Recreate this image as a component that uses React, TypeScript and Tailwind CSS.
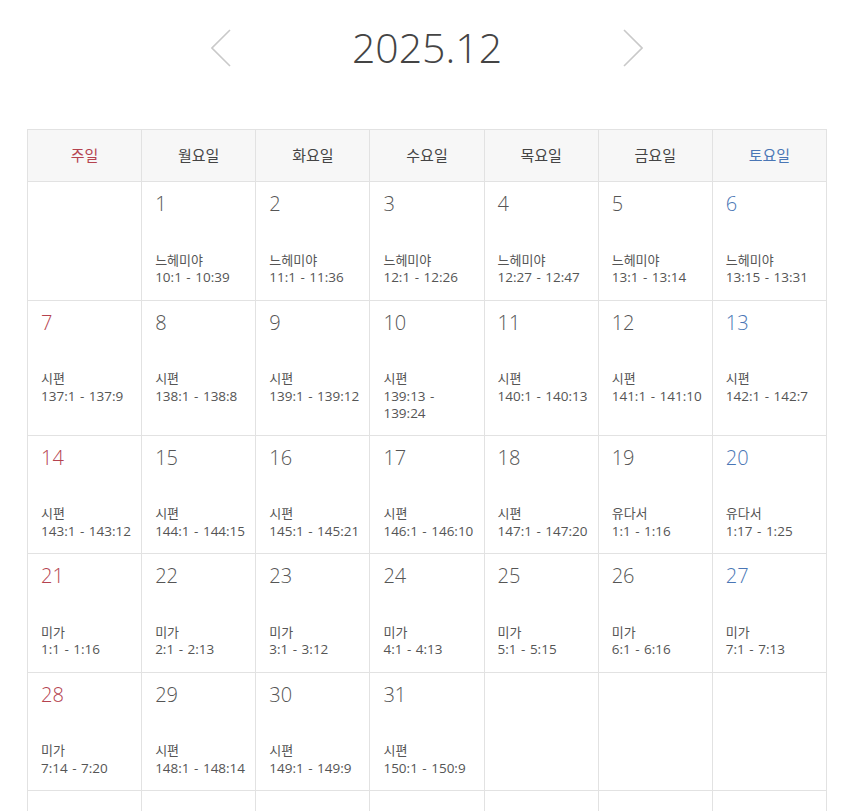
import React from "react";

type Day = { d: number; book: string; range: string } | null;

const WEEKDAYS = ["주일", "월요일", "화요일", "수요일", "목요일", "금요일", "토요일"];

const WEEKS: Day[][] = [
  [
    null,
    { d: 1, book: "느헤미야", range: "10:1 - 10:39" },
    { d: 2, book: "느헤미야", range: "11:1 - 11:36" },
    { d: 3, book: "느헤미야", range: "12:1 - 12:26" },
    { d: 4, book: "느헤미야", range: "12:27 - 12:47" },
    { d: 5, book: "느헤미야", range: "13:1 - 13:14" },
    { d: 6, book: "느헤미야", range: "13:15 - 13:31" },
  ],
  [
    { d: 7, book: "시편", range: "137:1 - 137:9" },
    { d: 8, book: "시편", range: "138:1 - 138:8" },
    { d: 9, book: "시편", range: "139:1 - 139:12" },
    { d: 10, book: "시편", range: "139:13 - 139:24" },
    { d: 11, book: "시편", range: "140:1 - 140:13" },
    { d: 12, book: "시편", range: "141:1 - 141:10" },
    { d: 13, book: "시편", range: "142:1 - 142:7" },
  ],
  [
    { d: 14, book: "시편", range: "143:1 - 143:12" },
    { d: 15, book: "시편", range: "144:1 - 144:15" },
    { d: 16, book: "시편", range: "145:1 - 145:21" },
    { d: 17, book: "시편", range: "146:1 - 146:10" },
    { d: 18, book: "시편", range: "147:1 - 147:20" },
    { d: 19, book: "유다서", range: "1:1 - 1:16" },
    { d: 20, book: "유다서", range: "1:17 - 1:25" },
  ],
  [
    { d: 21, book: "미가", range: "1:1 - 1:16" },
    { d: 22, book: "미가", range: "2:1 - 2:13" },
    { d: 23, book: "미가", range: "3:1 - 3:12" },
    { d: 24, book: "미가", range: "4:1 - 4:13" },
    { d: 25, book: "미가", range: "5:1 - 5:15" },
    { d: 26, book: "미가", range: "6:1 - 6:16" },
    { d: 27, book: "미가", range: "7:1 - 7:13" },
  ],
  [
    { d: 28, book: "미가", range: "7:14 - 7:20" },
    { d: 29, book: "시편", range: "148:1 - 148:14" },
    { d: 30, book: "시편", range: "149:1 - 149:9" },
    { d: 31, book: "시편", range: "150:1 - 150:9" },
    null,
    null,
    null,
  ],
  [null, null, null, null, null, null, null],
];

const font = "font-['Open_Sans','Noto_Sans_CJK_KR',sans-serif]";

function Chevron({ dir }: { dir: "left" | "right" }) {
  return (
    <svg width="20" height="38" viewBox="0 0 20 38" fill="none" className="shrink-0">
      <path
        d={dir === "left" ? "M19 1 L1 19 L19 37" : "M1 1 L19 19 L1 37"}
        stroke="#c9c9c9"
        strokeWidth="1.6"
      />
    </svg>
  );
}

function Cell({ day, col }: { day: Day; col: number }) {
  const numColor =
    col === 0 ? "text-[#b5434f]" : col === 6 ? "text-[#4a76b5]" : "text-[#555]";
  return (
    <div className="border-r border-b border-[#e2e2e2] pl-[13px] pr-[8px] pt-[10px] pb-[12px] min-h-[118.5px]">
      {day && (
        <>
          <div className={`h-[24px] text-[20px] leading-[24px] font-light ${numColor}`}>
            {day.d}
          </div>
          <div className="mt-[35.5px] leading-[17.5px] text-[#555]">
            <div className="text-[13px]">{day.book}</div>
            <div className="text-[13.5px] [word-spacing:1px]">{day.range}</div>
          </div>
        </>
      )}
    </div>
  );
}

export default function App() {
  return (
    <div className={`bg-white min-h-[811px] ${font}`}>
      <div className="h-[96px] flex items-center justify-center">
        <Chevron dir="left" />
        <div className="w-[392px] text-center text-[41px] font-light text-[#444] leading-none pb-[2px]">
          2025.12
        </div>
        <Chevron dir="right" />
      </div>
      <div className="mt-[33px] mx-auto w-[800px] border-l border-t border-[#e2e2e2] grid grid-cols-7">
        {WEEKDAYS.map((w, i) => (
          <div
            key={w}
            className={`h-[52px] flex items-center justify-center bg-[#f7f7f7] border-r border-b border-[#e2e2e2] text-[15px] ${
              i === 0 ? "text-[#b5434f]" : i === 6 ? "text-[#4a76b5]" : "text-[#444]"
            }`}
          >
            {w}
          </div>
        ))}
        {WEEKS.map((week, wi) =>
          week.map((day, ci) => <Cell key={`${wi}-${ci}`} day={day} col={ci} />)
        )}
      </div>
    </div>
  );
}
